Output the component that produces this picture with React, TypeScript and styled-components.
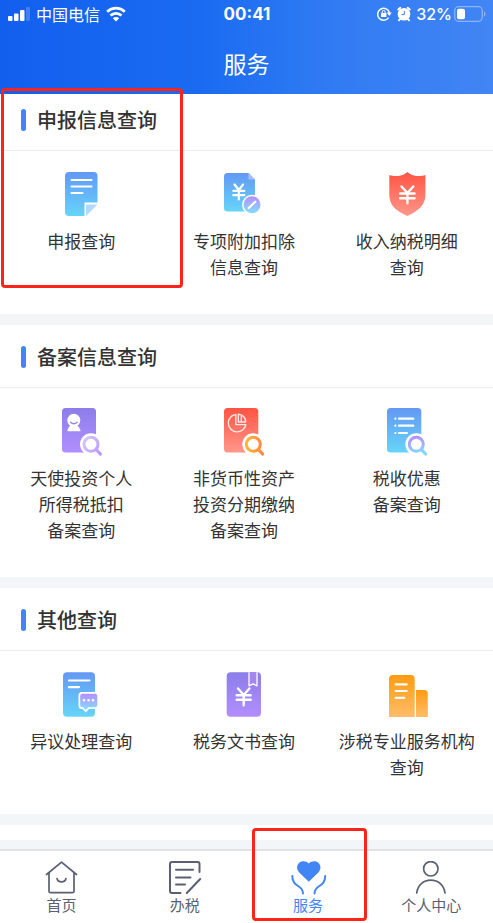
import React from 'react';
import styled, { createGlobalStyle } from 'styled-components';

const GlobalStyle = createGlobalStyle`
  * { box-sizing: border-box; }
  body {
    margin: 0;
    background: #f2f6f9;
    color: #333;
    font-family: 'Noto Sans CJK SC', sans-serif;
  }
`;

const Page = styled.div`
  display: flex;
  flex-direction: column;
  min-height: 100vh;
`;

const Header = styled.header`
  background: linear-gradient(90deg, #125fee 0%, #1a6bf2 40%, #2f7af3 65%, #4285f4 100%);
  color: #fff;
  height: 94px;
`;

const StatusBar = styled.div`
  display: grid;
  grid-template-columns: 1fr auto 1fr;
  align-items: center;
  height: 28px;
  padding: 0 7px 0 8px;
  font-size: 16px;
  line-height: 28px;
`;

const StatusGroup = styled.div<{ $end?: boolean }>`
  display: flex;
  align-items: center;
  justify-content: ${(p) => (p.$end ? 'flex-end' : 'flex-start')};
  gap: ${(p) => (p.$end ? 5 : 6)}px;
`;

const Clock = styled.time`
  font: 700 17px/28px Inter, sans-serif;
`;

const Battery = styled.span`
  display: flex;
  align-items: center;
  gap: 2px;
  font: 500 16px/28px Inter, sans-serif;
`;

const PageTitle = styled.h1`
  margin: 0;
  padding-top: 17px;
  font-size: 23px;
  font-weight: 400;
  line-height: 36px;
  text-align: center;
`;

const Main = styled.main`
  display: flex;
  flex: 1;
  flex-direction: column;
  gap: 11px;
  padding-bottom: 9px;
`;

const Section = styled.section`
  position: relative;
  background: #fff;
`;

const NextSection = styled.div`
  height: 15px;
  background: #fff;
`;

const SectionTitle = styled.h2<{ $first?: boolean }>`
  display: flex;
  align-items: center;
  gap: 11px;
  margin: 0;
  padding: ${(p) => (p.$first ? 12 : 18)}px 21px 16px;
  border-bottom: 1px solid #ebedf0;
  font-size: 20px;
  font-weight: 500;
  line-height: 28px;

  &::before {
    content: '';
    width: 5px;
    height: 22px;
    border-radius: 3px;
    background: #4285f4;
  }
`;

const Grid = styled.div`
  display: grid;
  grid-template-columns: repeat(3, 1fr);
  padding: 20px 5px 34px 0;
`;

const Entry = styled.button`
  display: flex;
  flex-direction: column;
  align-items: center;
  gap: 9px;
  padding: 0;
  border: 0;
  background: none;
  color: inherit;
  font: inherit;
  font-size: 17px;
  line-height: 26px;
  cursor: pointer;

  svg { overflow: visible; }
`;

const Line = styled.span`
  display: block;
  white-space: nowrap;
`;

const TabBar = styled.nav`
  position: sticky;
  bottom: 0;
  display: grid;
  grid-template-columns: repeat(4, 1fr);
  height: 74px;
  border-top: 2px solid #e1e3e6;
  background: #fff;
`;

const Tab = styled.a<{ $active?: boolean }>`
  position: relative;
  display: flex;
  flex-direction: column;
  align-items: center;
  padding-top: 10px;
  color: ${(p) => (p.$active ? '#4285f4' : '#5a6072')};
  font-size: 15px;
  line-height: 20px;
  text-decoration: none;
`;

const Highlight = styled.span`
  position: absolute;
  border: 3px solid #ff2419;
  border-radius: 4px;
  pointer-events: none;
`;

const EntryHighlight = styled(Highlight)`
  z-index: 1;
  top: -6px;
  left: 1px;
  width: 182px;
  height: 200px;
`;

const TabHighlight = styled(Highlight)`
  top: -23px;
  left: 5px;
  width: 115px;
  height: 93px;
`;

const palettes = {
  blue: ['#6398f5', '#66d5f8'],
  red: ['#ff5443', '#ff978b'],
  purple: ['#8c7ee9', '#b28eff'],
  orange: ['#ff9b12', '#ffbd69'],
  lilac: ['#b58fff', '#82ddff'],
};

type Palette = keyof typeof palettes;

const Defs = styled.svg`
  position: absolute;
`;

const Gradients = () => (
  <Defs width="0" height="0" aria-hidden="true">
    <defs>
      {(Object.keys(palettes) as Palette[]).map((name) => (
        <linearGradient key={name} id={name} x1="0" y1="0" x2="0" y2="1">
          <stop offset="0" stopColor={palettes[name][0]} />
          <stop offset="1" stopColor={palettes[name][1]} />
        </linearGradient>
      ))}
      <linearGradient id="lensPale" gradientUnits="userSpaceOnUse" x1="27" y1="36" x2="44" y2="47">
        <stop offset="0" stopColor="#d3c1ff" />
        <stop offset="1" stopColor="#b594ff" />
      </linearGradient>
      <linearGradient id="lensAmber" gradientUnits="userSpaceOnUse" x1="27" y1="38" x2="42" y2="38">
        <stop offset="0" stopColor="#ffb638" />
        <stop offset="1" stopColor="#ff8742" />
      </linearGradient>
      <linearGradient id="lensLilac" gradientUnits="userSpaceOnUse" x1="33" y1="28" x2="35" y2="46">
        <stop offset="0" stopColor="#b68fff" />
        <stop offset="1" stopColor="#83d9ff" />
      </linearGradient>
    </defs>
  </Defs>
);

const Art = ({ children }: { children: React.ReactNode }) => (
  <svg width="48" height="48" viewBox="0 0 48 48" fill="none" strokeLinecap="round" strokeLinejoin="round" aria-hidden="true">
    {children}
  </svg>
);

const Lens = ({ x, paint }: { x: number; paint: string }) => (
  <>
    <circle cx={x} cy="36.3" r="11" fill="#fff" />
    <circle cx={x} cy="36.3" r="7" stroke={`url(#${paint})`} strokeWidth="3" />
    <path d={`M${x + 5.4} 41.8 L${x + 9.3} 46`} stroke={`url(#${paint})`} strokeWidth="3.2" />
  </>
);

const DeclarationIcon = () => (
  <Art>
    <path d="M12 1h24.500a4 4 0 0 1 4 4v26.500H27.500V45H12a4 4 0 0 1-4-4V5a4 4 0 0 1 4-4z" fill="url(#blue)" />
    <path d="M29 33.500h11.500L29 45z" fill="#afdaff" />
    <path d="M14.500 9h20M14.500 15.500h20M14.500 22h11" stroke="#fff" strokeWidth="2" />
  </Art>
);

const DeductionIcon = () => (
  <Art>
    <path d="M7.500 2h21l6.500 6.500V37a3.500 3.500 0 0 1-3.500 3.500h-24A3.500 3.500 0 0 1 4 37V5.500A3.500 3.500 0 0 1 7.500 2z" fill="url(#blue)" />
    <path d="M28.500 2v6.500H35z" fill="#a9bdf9" />
    <path d="M14.500 13.500l4.300 5.500 4.300-5.500M13.300 19.800h11M13.300 24.200h11M18.800 19v9.500" stroke="#fff" strokeWidth="2.200" />
    <circle cx="32" cy="33.700" r="10" fill="#fff" />
    <circle cx="32" cy="33.700" r="8.500" fill="url(#lilac)" />
    <path d="M28.700 37l6.600-6.300" stroke="#fff" strokeWidth="2.200" />
  </Art>
);

const ShieldIcon = () => (
  <Art>
    <path d="M24.400 1c2.500 2 5.500 3.700 9 4 3 .3 6.500-.1 9-1v20c0 10-7 16-18 21C13 40 6.300 34 6.300 24V4c2.500.9 6 1.300 9 1 3.500-.3 6.600-2 9.100-4z" fill="url(#red)" />
    <path d="M18.500 15.500l5.900 6.500 5.900-6.500M17.200 22.500h14.400M17.200 27.200h14.400M24.400 22v10.300" stroke="#fff" strokeWidth="2.400" />
  </Art>
);

const InvestorIcon = () => (
  <Art>
    <rect x="5" y="0" width="34" height="44.500" rx="3.500" fill="url(#purple)" />
    <path d="M13.300 16h6.800c-.5 2.500 3.400 3.300 3.400 7.200H10.500c0-3.900 3.300-4.700 2.800-7.200z" fill="#fff" />
    <circle cx="16.800" cy="12.300" r="6.500" fill="#fff" />
    <path d="M13.500 14.300q3.300 3 6.600 0" stroke="#9280eb" strokeWidth="1.300" />
    <Lens x={34} paint="lensPale" />
  </Art>
);

const AssetIcon = () => (
  <Art>
    <rect x="4" y="0" width="34.300" height="44.500" rx="3.500" fill="url(#red)" />
    <path d="M15.800 6.400a8.800 8.800 0 1 0 10 10.200H15.800zM18.300 6.300v7.700h7.400a7.500 7.500 0 0 0-7.400-7.700zM21.300 8.500v5.300" stroke="#ffe7e4" strokeWidth="1.400" />
    <Lens x={33.3} paint="lensAmber" />
  </Art>
);

const BenefitIcon = () => (
  <Art>
    <rect x="4" y="0" width="34.300" height="44.500" rx="3.500" fill="url(#blue)" />
    <path d="M12.400 10.700h.01M12.400 17.700h.01M12.400 25h.01M16 10.700h14.300M16 17.700h14.300M16 25h8" stroke="#fff" strokeWidth="2.200" />
    <Lens x={33.3} paint="lensLilac" />
  </Art>
);

const ObjectionIcon = () => (
  <Art>
    <rect x="6" y="1.300" width="32" height="44.500" rx="4" fill="url(#blue)" />
    <path d="M12 9.500h20.500M12 16.200h10" stroke="#fff" strokeWidth="2.200" />
    <path d="M25 21H38v17h-6l-3.200 3.500-3.200-3.500H25a3.500 3.500 0 0 1-3.500-3.500v-10A3.500 3.500 0 0 1 25 21z" fill="#fff" />
    <path d="M25.500 22.700H38a2.300 2.300 0 0 1 2.300 2.300v9a2.300 2.300 0 0 1-2.300 2.300h-6.700l-2.500 2.700-2.500-2.700h-.8a2.300 2.300 0 0 1-2.300-2.300v-9a2.300 2.300 0 0 1 2.300-2.300z" fill="url(#lilac)" />
    <path d="M27 29.300h.01M31.500 29.300h.01M36 29.300h.01" stroke="#fff" strokeWidth="2.600" />
  </Art>
);

const DocumentIcon = () => (
  <Art>
    <rect x="6.700" y="1.300" width="34.300" height="44.500" rx="4" fill="url(#purple)" />
    <path d="M29 1.300v13.500l4-1.900 4 1.900V1.300" fill="#a386f2" stroke="#fff" strokeWidth="1.300" strokeLinecap="butt" />
    <path d="M18 17.500l5.700 6.500 5.700-6.500M16.700 24.300h14M16.700 28.700h14M23.700 24v10.300" stroke="#fff" strokeWidth="2.400" />
  </Art>
);

const AgencyIcon = () => (
  <Art>
    <path d="M10 4h17.700a4 4 0 0 1 4 4v38H6V8a4 4 0 0 1 4-4z" fill="url(#orange)" />
    <path d="M33 19h8.300a3.500 3.500 0 0 1 3.500 3.500V46H33z" fill="url(#orange)" />
    <path d="M12.700 13.300h11M12.700 20h11M12.700 26.800h8.600" stroke="#fff" strokeWidth="2.200" />
  </Art>
);

const TabArt = ({ children }: { children: React.ReactNode }) => (
  <svg width="38" height="34" viewBox="0 0 38 34" fill="none" stroke="currentColor" strokeWidth="1.700" strokeLinecap="round" strokeLinejoin="round" aria-hidden="true">
    {children}
  </svg>
);

const HomeIcon = () => (
  <TabArt>
    <path d="M3.500 13.500L18.500 1.200l15 12.300M6 12v18.200a1.500 1.500 0 0 0 1.500 1.500h22a1.500 1.500 0 0 0 1.500-1.500V12M14 17.500c1 4.500 8 4.500 9 0" />
  </TabArt>
);

const TaxIcon = () => (
  <TabArt>
    <path d="M33.500 11V3a2 2 0 0 0-2-2H6a2 2 0 0 0-2 2v27a2 2 0 0 0 2 2h8.500M10 8.800h17M10 16.400h14.500M10 23.500h9M34.200 18L20.800 32" strokeWidth="2" />
  </TabArt>
);

const ServiceIcon = () => (
  <TabArt>
    <path d="M19.800 20.800L10 11.200C6.300 7.200 8.300 1 13.500.3c2.700-.2 4.900.6 6.300 2.200C21.200.9 23.400.1 26.100.3c5.200.7 7.200 6.900 3.500 10.900z" fill="currentColor" stroke="none" />
    <path d="M3.300 15c0 12 10.700 8 10.700 17.500M36.200 15c0 12-10.700 8-10.700 17.500" strokeWidth="2" />
  </TabArt>
);

const ProfileIcon = () => (
  <TabArt>
    <circle cx="18.800" cy="7.800" r="7.200" />
    <path d="M4.700 32c1-7.800 6.800-12.800 14.100-12.800S32.100 24.200 33 32" />
  </TabArt>
);

const sections = [
  {
    title: '申报信息查询',
    highlighted: true,
    entries: [
      { icon: DeclarationIcon, lines: ['申报查询'] },
      { icon: DeductionIcon, lines: ['专项附加扣除', '信息查询'] },
      { icon: ShieldIcon, lines: ['收入纳税明细', '查询'] },
    ],
  },
  {
    title: '备案信息查询',
    entries: [
      { icon: InvestorIcon, lines: ['天使投资个人', '所得税抵扣', '备案查询'] },
      { icon: AssetIcon, lines: ['非货币性资产', '投资分期缴纳', '备案查询'] },
      { icon: BenefitIcon, lines: ['税收优惠', '备案查询'] },
    ],
  },
  {
    title: '其他查询',
    entries: [
      { icon: ObjectionIcon, lines: ['异议处理查询'] },
      { icon: DocumentIcon, lines: ['税务文书查询'] },
      { icon: AgencyIcon, lines: ['涉税专业服务机构', '查询'] },
    ],
  },
];

const tabs = [
  { label: '首页', icon: HomeIcon },
  { label: '办税', icon: TaxIcon },
  { label: '服务', icon: ServiceIcon, active: true },
  { label: '个人中心', icon: ProfileIcon },
];

const SignalIcon = () => (
  <svg width="22" height="16" viewBox="0 0 22 16" fill="#fff" aria-hidden="true">
    <rect x="0" y="10" width="4.500" height="5" rx="1" />
    <rect x="6" y="7.500" width="4.500" height="7.500" rx="1" />
    <rect x="12" y="4" width="4.500" height="11" rx="1" />
    <rect x="18" y="1" width="4" height="14" rx="1" opacity=".2" />
  </svg>
);

const WifiIcon = () => (
  <svg width="20" height="16" viewBox="0 0 20 16" fill="none" stroke="#fff" strokeWidth="2.800" aria-hidden="true">
    <path d="M1.200 5.700c5-4.700 12.600-4.700 17.600 0M4.500 9.600c3.200-3 7.800-3 11 0" />
    <path d="M10 15.500l-3.200-3.300c1.900-1.700 4.500-1.700 6.400 0z" fill="#fff" stroke="none" />
  </svg>
);

const RotationLockIcon = () => (
  <svg width="16" height="16" viewBox="0 0 16 16" fill="none" stroke="#fff" strokeWidth="1.500" aria-hidden="true">
    <path d="M12.600 11.700A6 6 0 1 1 13.500 7" />
    <path d="M10.700 6.500h5.100l-2.500 3.500z" fill="#fff" stroke="none" />
    <rect x="5" y="7" width="5.400" height="4" rx=".6" fill="#fff" stroke="none" />
    <path d="M6.200 7.300V6a1.500 1.500 0 0 1 3 0v1.300" strokeWidth="1" />
  </svg>
);

const AlarmIcon = () => (
  <svg width="14" height="16" viewBox="0 0 14 16" aria-hidden="true">
    <circle cx="7" cy="8.300" r="6.300" fill="#fff" />
    <path d="M1.300 3.500l2-1.700M12.700 3.500l-2-1.700M3 13l-1 1.300M11 13l1 1.300" stroke="#fff" strokeWidth="2" strokeLinecap="round" />
    <path d="M7.300 5v3.600H4.500" stroke="#3a80f4" strokeWidth="1" fill="none" />
  </svg>
);

const BatteryIcon = () => (
  <svg width="32" height="16" viewBox="0 0 32 16" aria-hidden="true">
    <rect x=".7" y=".7" width="27.600" height="14.600" rx="4" fill="none" stroke="#fff" strokeWidth="1.300" opacity=".4" />
    <rect x="3" y="2.700" width="8" height="10.600" rx="2" fill="#fff" />
    <path d="M30 5.500c2 .5 2 4.500 0 5z" fill="#fff" opacity=".4" />
  </svg>
);

export default function App() {
  return (
    <Page lang="zh-CN">
      <GlobalStyle />
      <Gradients />
      <Header>
        <StatusBar>
          <StatusGroup>
            <SignalIcon />
            <span>中国电信</span>
            <WifiIcon />
          </StatusGroup>
          <Clock>00:41</Clock>
          <StatusGroup $end>
            <RotationLockIcon />
            <AlarmIcon />
            <Battery>
              32%
              <BatteryIcon />
            </Battery>
          </StatusGroup>
        </StatusBar>
        <PageTitle>服务</PageTitle>
      </Header>
      <Main>
        {sections.map((section, index) => (
          <Section key={section.title}>
            <SectionTitle $first={index === 0}>{section.title}</SectionTitle>
            <Grid>
              {section.entries.map(({ icon: Icon, lines }) => (
                <Entry key={lines.join('')} type="button">
                  <Icon />
                  <span>
                    {lines.map((line) => (
                      <Line key={line}>{line}</Line>
                    ))}
                  </span>
                </Entry>
              ))}
            </Grid>
            {section.highlighted && <EntryHighlight />}
          </Section>
        ))}
        <NextSection />
      </Main>
      <TabBar>
        {tabs.map(({ label, icon: Icon, active }) => (
          <Tab key={label} href="#" $active={active} aria-current={active ? 'page' : undefined}>
            <Icon />
            {label}
            {active && <TabHighlight />}
          </Tab>
        ))}
      </TabBar>
    </Page>
  );
}
